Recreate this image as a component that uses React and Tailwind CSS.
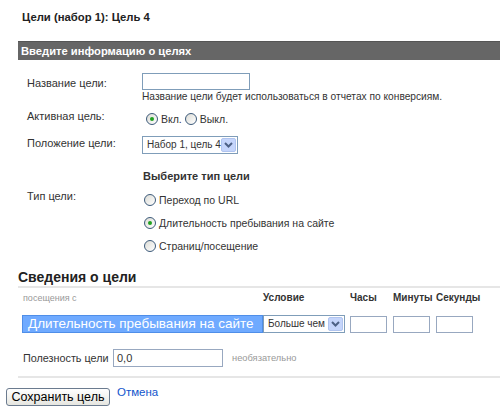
import React from "react";

const Radio = ({ checked, label }) => (
  <label className="flex items-center gap-[3px] h-[14px]">
    <span className="w-[12px] h-[12px] rounded-full border border-[#3c5a7a] bg-gradient-to-br from-[#dcdcd6] to-white flex items-center justify-center">
      {checked && <span className="w-[4px] h-[4px] rounded-full bg-[#21a121]"></span>}
    </span>
    <span>{label}</span>
  </label>
);

const Select = ({ value, className }) => (
  <div className={"h-[18px] border border-[#7f9db9] bg-white flex items-center justify-between pl-[4px] pr-[1px] whitespace-nowrap " + className}>
    <span className="text-[10px]">{value}</span>
    <span className="w-[15px] h-[14px] bg-[#c5d5fb] border border-[#b0c4ef] rounded-[2px] flex items-center justify-center">
      <svg width="9" height="6" viewBox="0 0 9 6">
        <path d="M1 1 L4.5 4.5 L8 1" fill="none" stroke="#4d6185" strokeWidth="2" />
      </svg>
    </span>
  </div>
);

const App = () => {
  return (
    <div className="w-[500px] h-[417px] bg-white text-[10.5px] text-[#333] overflow-hidden font-['Liberation_Sans',Arial,sans-serif] leading-[14px]">
      {/* Title */}
      <div className="pt-[10px] pl-[22px] font-bold text-[11.3px] text-[#222]">Цели (набор 1): Цель 4</div>

      {/* Header bar */}
      <div className="ml-[18px] mt-[17px] h-[19px] bg-[#666] border-t border-[#555] text-white font-bold text-[11.2px] leading-[18px] pl-[3px]">
        Введите информацию о целях
      </div>

      {/* Goal info */}
      <div className="pl-[27px] mt-[13px]">
        <div className="flex">
          <div className="w-[115px] pt-[3px] text-[11px]">Название цели:</div>
          <div>
            <div className="w-[108px] h-[17px] border border-[#7f9db9]"></div>
            <div className="text-[10.2px]">Название цели будет использоваться в отчетах по конверсиям.</div>
          </div>
        </div>

        <div className="flex mt-[5px] h-[20px]">
          <div className="w-[115px] text-[11px]">Активная цель:</div>
          <div className="flex gap-[3px] pt-[3px] pl-[4px]">
            <Radio checked label="Вкл." />
            <Radio label="Выкл." />
          </div>
        </div>

        <div className="flex mt-[7px] h-[18px]">
          <div className="w-[115px] text-[11px]">Положение цели:</div>
          <Select value="Набор 1, цель 4" className="w-[96px]" />
        </div>

        <div className="flex mt-[15px]">
          <div className="w-[115px] pt-[20px] text-[11px]">Тип цели:</div>
          <div>
            <div className="font-bold text-[11px] ml-[1px]">Выберите тип цели</div>
            <div className="flex flex-col gap-[9px] mt-[10px] pl-[2px]">
              <Radio label="Переход по URL" />
              <Radio checked label="Длительность пребывания на сайте" />
              <Radio label="Страниц/посещение" />
            </div>
          </div>
        </div>
      </div>

      {/* Goal details */}
      <div className="ml-[18px] mt-[16px]">
        <div className="font-bold text-[14px] leading-[16px] text-[#222] pb-[1px] border-b-2 border-[#e6e6e6]">Сведения о цели</div>
        <div className="flex mt-[3px] items-end">
          <div className="w-[245px] pl-[5px] text-[9px] text-[#999]">посещения с</div>
          <div className="w-[87px] font-bold text-[10px]">Условие</div>
          <div className="w-[43px] font-bold text-[10px]">Часы</div>
          <div className="w-[43px] font-bold text-[10px]">Минуты</div>
          <div className="font-bold text-[10px]">Секунды</div>
        </div>
        <div className="flex mt-[10px] items-center">
          <div className="ml-[4px] w-[241px] h-[18px] bg-[#6faaff] border border-[#4f8ee8] text-white text-[13.5px] leading-[16px] pl-[5px] whitespace-nowrap">
            Длительность пребывания на сайте
          </div>
          <Select value="Больше чем" className="w-[82px]" />
          <div className="ml-[5px] w-[37px] h-[17px] border border-[#98a8c0]"></div>
          <div className="ml-[6px] w-[37px] h-[17px] border border-[#98a8c0]"></div>
          <div className="ml-[6px] w-[37px] h-[17px] border border-[#98a8c0]"></div>
        </div>
        <div className="flex items-center mt-[16px] pl-[5px] pb-[9px] border-b-2 border-[#e6e6e6]">
          <div className="w-[90px] text-[10.8px]">Полезность цели</div>
          <div className="w-[110px] h-[18px] border border-[#98a8c0] pl-[3px] leading-[16px] text-[11px]">0,0</div>
          <div className="ml-[9px] text-[9.3px] text-[#999]">необязательно</div>
        </div>
      </div>

      {/* Actions */}
      <div className="flex items-start mt-[10px] ml-[6px]">
        <button className="w-[104px] h-[18px] border border-[#6b7b8f] rounded-[3px] bg-gradient-to-b from-white to-[#e6e6e0] text-[12.5px] text-black leading-[16px]">
          Сохранить цель
        </button>
        <a href="#" className="ml-[7px] text-[#1155cc] text-[11.5px] mt-[-3px]">Отмена</a>
      </div>
    </div>
  );
};

export default App;
